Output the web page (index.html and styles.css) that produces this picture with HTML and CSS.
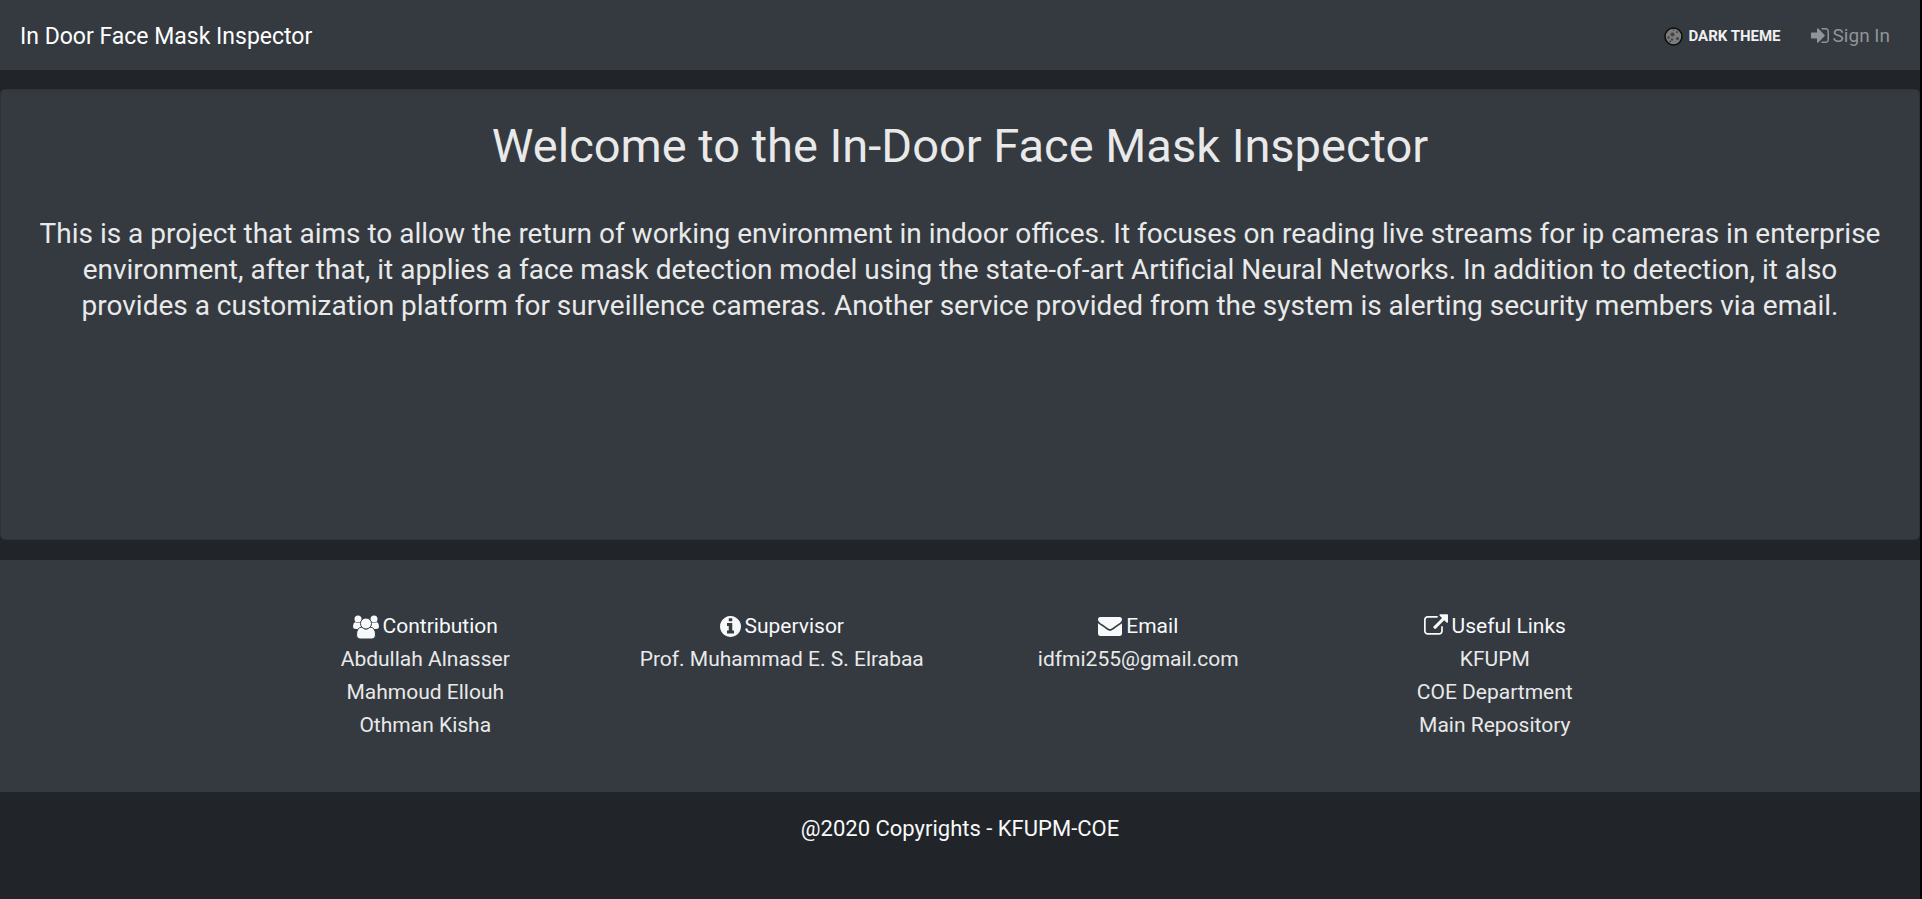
FILE: index.html
```html
<!DOCTYPE html>
<html lang="en">
<head>
<meta charset="utf-8">
<title>In Door Face Mask Inspector</title>
<link rel="stylesheet" href="styles.css">
</head>
<body>
<header class="navbar">
  <a class="brand" href="#">In Door Face Mask Inspector</a>
  <nav class="nav-actions">
    <button class="theme-toggle" type="button">
      <svg class="icon-moon" viewBox="0 0 19 19" aria-hidden="true">
        <circle cx="9.500" cy="9.500" r="8.500" fill="#7c7c7c" stroke="#0c0d0e" stroke-width="1.500"/>
        <g fill="#424446"><circle cx="8.500" cy="7.500" r="2"/><circle cx="4.500" cy="10.500" r="1.200"/><circle cx="13.500" cy="11.500" r="1.500"/><circle cx="13" cy="5" r="1"/><circle cx="8" cy="12.500" r="1.200"/><circle cx="6" cy="14.500" r="1"/><circle cx="9.500" cy="3" r="0.800"/></g>
      </svg>
      <span>DARK THEME</span>
    </button>
    <a class="sign-in" href="#">
      <svg class="icon-sign" viewBox="0 256 1536 1280" aria-hidden="true"><path d="M1184 896q0 26-19 45l-544 544q-19 19-45 19t-45-19-19-45v-288H64q-26 0-45-19T0 1088V704q0-26 19-45t45-19h448V352q0-26 19-45t45-19 45 19l544 544q19 19 19 45zm352-352v704q0 119-84.500 203.500T1248 1536H928q-13 0-22.500-9.500T896 1504q0-4-1-20t-.5-26.500 3-23.500 10-19.500T928 1408h320q66 0 113-47t47-113V544q0-66-47-113t-113-47H936l-11.500-1-11.500-3-8-5.500-7-9-2-13.500q0-4-1-20t-.5-26.500 3-23.500 10-19.500T928 256h320q119 0 203.500 84.500T1536 544z"/></svg>
      <span>Sign In</span>
    </a>
  </nav>
</header>
<main class="card">
  <h1 class="title">Welcome to the In-Door Face Mask Inspector</h1>
  <p class="intro">This is a project that aims to allow the return of working environment in indoor offices. It focuses on reading live streams for ip cameras in enterprise environment, after that, it applies a face mask detection model using the state-of-art Artificial Neural Networks. In addition to detection, it also provides a customization platform for surveillence cameras. Another service provided from the system is alerting security members via email.</p>
</main>
<footer>
  <div class="footer-band">
    <div class="columns">
      <section class="column">
        <h2 class="heading">
          <svg class="icon-users" viewBox="0 0 26 24" aria-hidden="true">
            <g><circle cx="5" cy="4" r="3.500"/><circle cx="21" cy="4" r="3.500"/><path d="M2 7q3 2 6 0v7H3q-3 0-3-2.500Q0 8 2 7zM24 7q-3 2-6 0v7h5q3 0 3-2.500Q26 8 24 7z"/></g>
            <g class="front"><path d="M9 12q4 4 8 0 5.500.500 5.500 8 0 4-3.500 4H7q-3.500 0-3.500-4 0-7.500 5.500-8z"/><circle cx="13" cy="8.500" r="5.500"/></g>
          </svg>
          <span>Contribution</span>
        </h2>
        <p class="line">Abdullah Alnasser</p>
        <p class="line">Mahmoud Ellouh</p>
        <p class="line">Othman Kisha</p>
      </section>
      <section class="column">
        <h2 class="heading">
          <svg class="icon-info" viewBox="0 128 1536 1536" aria-hidden="true"><path d="M1024 1376v-160q0-14-9-23t-23-9h-96V672q0-14-9-23t-23-9H544q-14 0-23 9t-9 23v160q0 14 9 23t23 9h96v320h-96q-14 0-23 9t-9 23v160q0 14 9 23t23 9h448q14 0 23-9t9-23zM896 480V320q0-14-9-23t-23-9H672q-14 0-23 9t-9 23v160q0 14 9 23t23 9h192q14 0 23-9t9-23zm640 416q0 209-103 385.500T1153.500 1561 768 1664t-385.500-103T103 1281.500 0 896t103-385.500T382.500 231 768 128t385.500 103T1433 510.500 1536 896z"/></svg>
          <span>Supervisor</span>
        </h2>
        <p class="line">Prof. Muhammad E. S. Elrabaa</p>
      </section>
      <section class="column">
        <h2 class="heading">
          <svg class="icon-mail" viewBox="0 256 1792 1408" aria-hidden="true"><path d="M1792 710v794q0 66-47 113t-113 47H160q-66 0-113-47T0 1504V710q44 49 101 87 362 246 497 345 57 42 92.500 65.500t94.500 48 110 24.500h2q51 0 110-24.500t94.500-48 92.500-65.500q170-123 498-345 57-39 100-87zm0-294q0 79-49 151t-122 123q-376 261-468 325-10 7-42.500 31t-54 38.500-52 32.500-57.500 27-50 9h-2q-23 0-50-9t-57.500-27-52-32.500-54-38.500T639 1015q-91-64-262-182.500T172 690q-62-42-117-115.500T0 438q0-78 41.500-130T160 256h1472q65 0 112.500 47t47.500 113z"/></svg>
          <span>Email</span>
        </h2>
        <p class="line">idfmi255@gmail.com</p>
      </section>
      <section class="column">
        <h2 class="heading">
          <svg class="icon-link" viewBox="0 0 1792 1536" aria-hidden="true"><path d="M1408 928v320q0 119-84.500 203.500T1120 1536H288q-119 0-203.500-84.500T0 1248V416q0-119 84.500-203.500T288 128h704q14 0 23 9t9 23v64q0 14-9 23t-23 9H288q-66 0-113 47t-47 113v832q0 66 47 113t113 47h832q66 0 113-47t47-113V928q0-14 9-23t23-9h64q14 0 23 9t9 23zm384-864v512q0 26-19 45t-45 19-45-19l-176-176-652 652q-10 10-23 10t-23-10L695 983q-10-10-10-23t10-23l652-652-176-176q-19-19-19-45t19-45 45-19h512q26 0 45 19t19 45z"/></svg>
          <span>Useful Links</span>
        </h2>
        <a class="line" href="#">KFUPM</a>
        <a class="line" href="#">COE Department</a>
        <a class="line" href="#">Main Repository</a>
      </section>
    </div>
  </div>
  <p class="copyright">@2020 Copyrights - KFUPM-COE</p>
</footer>
</body>
</html>
```
FILE: styles.css
```css
* {
  box-sizing: border-box;
}

body {
  margin: 0;
  min-height: 100vh;
  border-right: 2px solid #000008;
  background: #212529;
  color: #f8f9fa;
  font-family: Roboto, "Noto Sans", sans-serif;
  font-size: 22px;
  line-height: 33px;
}

h1, h2, p {
  margin: 0;
  font-weight: 400;
}

a {
  color: inherit;
  text-decoration: none;
}

svg {
  display: block;
  flex: none;
  fill: currentColor;
}

.navbar {
  display: flex;
  align-items: center;
  justify-content: space-between;
  min-height: 70px;
  padding: 2px 30px 0 20px;
  background: #343a40;
}

.brand {
  color: #fff;
  font-size: 23px;
}

.nav-actions {
  display: flex;
  align-items: center;
  gap: 30px;
}

.theme-toggle {
  display: flex;
  align-items: center;
  gap: 6px;
  padding: 0;
  border: 0;
  background: none;
  color: #f0f0f0;
  font: 700 15px/24px Roboto, "Noto Sans", sans-serif;
}

.sign-in {
  display: flex;
  align-items: center;
  gap: 4px;
  padding-bottom: 2px;
  color: #909498;
  font-size: 19px;
}

.icon-moon {
  width: 19px;
  height: 19px;
}

.icon-sign {
  width: 18px;
  height: 15px;
}

.card {
  min-height: 451px;
  margin: 19px 0 20px;
  padding: 24px 28px;
  border: 1px solid #2e3338;
  border-radius: 5px;
  background: #343a40;
  color: #e9e9e9;
  text-align: center;
}

.title {
  font-size: 47px;
  line-height: 64px;
}

.intro {
  margin-top: 38px;
  font-size: 28px;
  line-height: 36px;
}

.footer-band {
  padding: 50px 0;
  background: #343a40;
}

.columns {
  display: grid;
  grid-template-columns: repeat(4, 1fr);
  width: 90%;
  max-width: 1426px;
  margin: 0 auto;
}

.column {
  display: flex;
  flex-direction: column;
  align-items: center;
  font-size: 21px;
}

.heading {
  display: flex;
  align-items: center;
  gap: 4px;
  font-size: 21px;
}

.line {
  color: #e9e9e9;
}

.icon-users {
  width: 26px;
  height: 24px;
}

.icon-users .front {
  stroke: #343a40;
  stroke-width: 1;
}

.icon-info {
  width: 21px;
  height: 21px;
}

.icon-mail {
  width: 24px;
  height: 19px;
}

.icon-link {
  width: 24px;
  height: 21px;
  margin-bottom: 4px;
}

.copyright {
  padding: 20px 0;
  text-align: center;
}
```
